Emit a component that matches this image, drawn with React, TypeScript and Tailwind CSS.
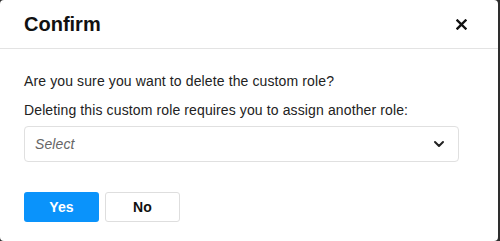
import { ChevronDown } from 'lucide-react';

export default function App() {
  return (
    <div className="w-[500px] h-[241px] bg-[#2e2e2e] flex" style={{ fontFamily: '"Liberation Sans", Arial, sans-serif' }}>
      <div className="w-[498px] h-full bg-white rounded-[4px] flex flex-col">
        {/* Header */}
        <div className="h-[49px] px-6 flex items-center justify-between border-b border-[#e3e3e3]">
          <h2 className="text-[20px] font-bold text-[#111]">Confirm</h2>
          <button className="mr-[7px] text-[#111]">
            <svg width="11" height="11" viewBox="0 0 11 11">
              <path d="M1.5 1.5 L9.5 9.5 M9.5 1.5 L1.5 9.5" stroke="currentColor" strokeWidth="2.4" strokeLinecap="square" />
            </svg>
          </button>
        </div>

        {/* Body */}
        <div className="px-6 pt-[22px] text-[14px] tracking-[0.12px]">
          <p className="leading-5 text-[#222]">Are you sure you want to delete the custom role?</p>
          <p className="mt-[9px] leading-5 text-[#222]">
            Deleting this custom role requires you to assign another role:
          </p>
          <div className="mt-[6px] w-[435px] h-[36px] border border-[#e0e0e0] rounded-[4px] flex items-center justify-between pl-[10px] pr-[11px]">
            <span className="italic text-[#666]">Select</span>
            <ChevronDown className="w-[16px] h-[16px] text-[#222]" strokeWidth={3} />
          </div>

          <div className="mt-[30px] flex gap-[6px]">
            <button className="w-[75px] h-[30px] rounded-[3px] bg-[#0a93fb] text-white font-bold">
              Yes
            </button>
            <button className="w-[75px] h-[30px] rounded-[3px] border border-[#dedede] bg-white text-[#111] font-bold">
              No
            </button>
          </div>
        </div>
      </div>
    </div>
  );
}
